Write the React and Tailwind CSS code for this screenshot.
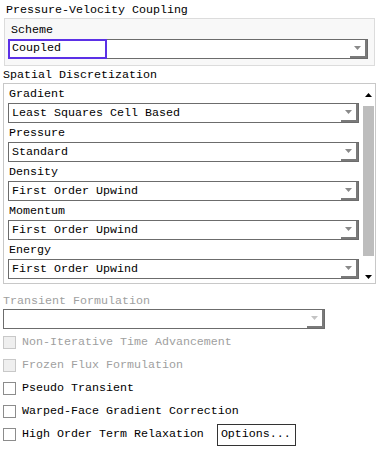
import React from "react"

const font = { fontFamily: '"Liberation Mono", "DejaVu Sans Mono", monospace' }

function Arrow({ color = "#8a8a8a" }) {
  return (
    <svg width="7" height="4" viewBox="0 0 7 4">
      <polygon points="0,0 7,0 3.5,4" fill={color} />
    </svg>
  )
}

function Combo({ value, width, focused, disabled }) {
  return (
    <div className={`flex h-[20px] border border-[#6c6c6c] bg-white ${width}`}>
      <div className="flex-1 flex items-center min-w-0">
        {focused ? (
          <div className="h-[20px] -mt-px -ml-px w-[99px] border-2 border-[#5b30e6] flex items-center pl-[2px] pt-px">
            {value}
          </div>
        ) : (
          <span className="pl-[3px] pt-px whitespace-nowrap">{value}</span>
        )}
      </div>
      <div className="w-[17px] flex items-center justify-center border-r-2 border-b-2 border-[#7a7a7a]">
        <Arrow color={disabled ? "#c4c4c4" : "#8a8a8a"} />
      </div>
    </div>
  )
}

function Check({ label, disabled, children }) {
  return (
    <div className="flex items-center h-[23px] pl-[3px]">
      <div
        className={`w-[13px] h-[13px] border ${
          disabled ? "border-[#c8c8c8] bg-[#efefef]" : "border-[#8c8c8c] bg-white"
        }`}
      />
      <span className={`ml-[6px] pt-px whitespace-nowrap ${disabled ? "text-[#a0a0a0]" : "text-black"}`}>
        {label}
      </span>
      {children}
    </div>
  )
}

const fields = [
  ["Gradient", "Least Squares Cell Based"],
  ["Pressure", "Standard"],
  ["Density", "First Order Upwind"],
  ["Momentum", "First Order Upwind"],
  ["Energy", "First Order Upwind"],
]

export default function App() {
  return (
    <div className="w-[379px] h-[452px] bg-white text-black text-[11.67px] overflow-hidden" style={font}>
      <div className="h-[18px] flex items-center pl-[6px] pt-[3px]">Pressure-Velocity Coupling</div>

      {/* Scheme group */}
      <div className="ml-[4px] w-[371px] h-[48px] border border-[#dcdcdc] bg-[#f8f8f8]">
        <div className="h-[20px] flex items-center pl-[6px] pt-[3px]">Scheme</div>
        <div className="pl-[3px]">
          <Combo value="Coupled" width="w-[360px]" focused />
        </div>
      </div>

      <div className="h-[17px] flex items-center pl-[3px] pt-[3px]">Spatial Discretization</div>

      {/* Scrolling panel */}
      <div className="ml-[3px] w-[373px] h-[201px] border border-[#c8c8c8] flex">
        <div className="flex-1 pl-[4px]">
          {fields.map(([label, value]) => (
            <div key={label}>
              <div className="h-[19px] flex items-center pl-[1px] pt-[3px]">{label}</div>
              <Combo value={value} width="w-[351px]" />
            </div>
          ))}
        </div>
        <div className="w-[13px] flex flex-col items-center">
          <div className="h-[22px] flex items-center">
            <svg width="7" height="4" viewBox="0 0 7 4">
              <polygon points="3.5,0 7,4 0,4" fill="#000" />
            </svg>
          </div>
          <div className="w-[11px] h-[150px] bg-[#bdbdbd]" />
          <div className="flex-1 flex items-end pb-[4px]">
            <Arrow color="#000" />
          </div>
        </div>
      </div>

      <div className="mt-[7px] h-[18px] flex items-center pl-[3px] pt-[3px] text-[#a0a0a0]">Transient Formulation</div>
      <div className="pl-[3px]">
        <Combo value="" width="w-[322px]" disabled />
      </div>

      <div className="mt-[2px]">
        <Check label="Non-Iterative Time Advancement" disabled />
        <Check label="Frozen Flux Formulation" disabled />
        <Check label="Pseudo Transient" />
        <Check label="Warped-Face Gradient Correction" />
        <Check label="High Order Term Relaxation">
          <div className="ml-[13px] w-[79px] h-[22px] border border-[#333] flex items-center pl-[3px] pt-px bg-white">
            Options...
          </div>
        </Check>
      </div>
    </div>
  )
}
